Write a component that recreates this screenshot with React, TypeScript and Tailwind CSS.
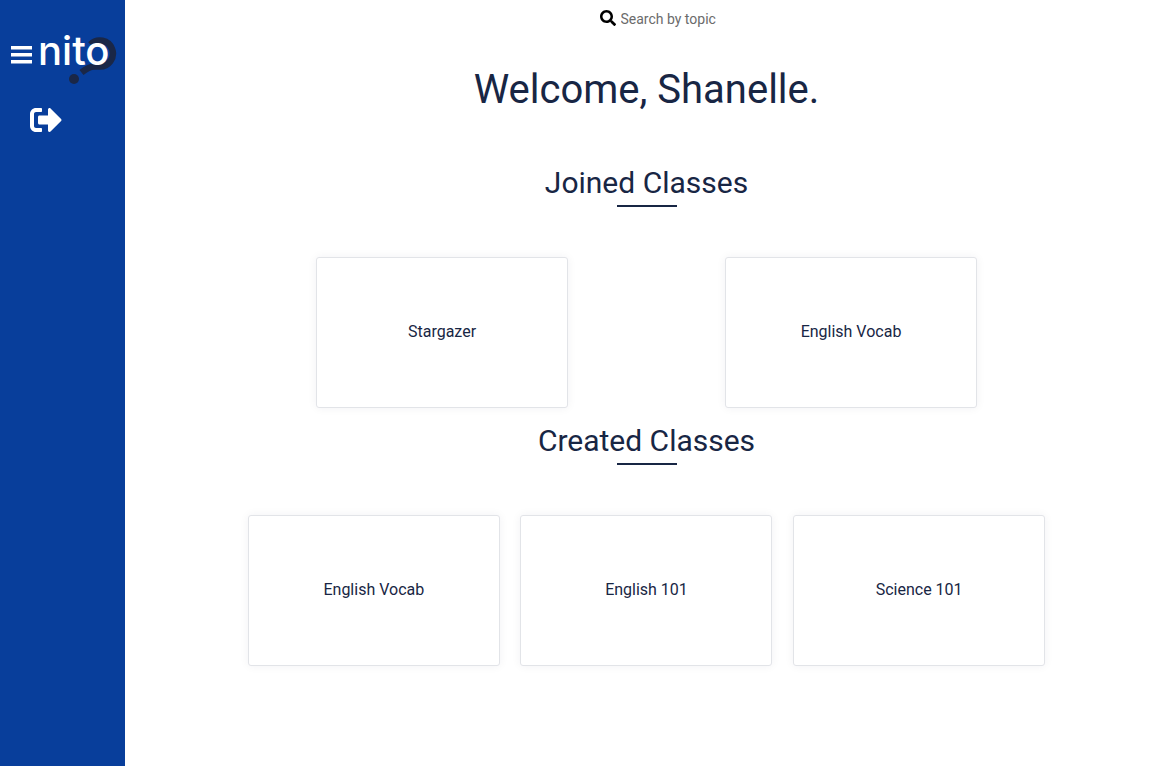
import { FaSearch, FaSignOutAlt } from "react-icons/fa";

function Logo() {
  return (
    <a href="#" aria-label="nito home" className="relative block text-[40px] leading-[42px] font-medium text-white font-[Inter,sans-serif]">
      <svg className="absolute top-0 left-0 h-14 w-20" viewBox="0 0 80 56" fill="none" aria-hidden="true">
        <path
          d="M52.500 14.500A13 13 0 1 1 61 36.500H56.500C52 36.500 48.500 38.500 43.500 42.500"
          stroke="#1a2747"
          strokeWidth="6.500"
        />
        <circle cx="36" cy="49" r="5" fill="#1a2747" />
      </svg>
      <span className="relative">nito</span>
    </a>
  );
}

function Sidebar() {
  return (
    <aside className="w-[125px] shrink-0 bg-[#083e9b] pt-[30px]">
      <div className="flex h-10 items-start pl-[11px]">
        <button type="button" aria-label="Toggle menu" className="mt-4 mr-[5px] text-white">
          <svg className="h-[18px] w-[22px]" viewBox="0 0 22 18" fill="currentColor" aria-hidden="true">
            <path d="M0 0h21v3.500H0zM0 7h21v3.500H0zM0 14h21v3.500H0z" />
          </svg>
        </button>
        <Logo />
      </div>
      <button type="button" aria-label="Log out" className="mt-[34px] ml-[30px] block text-white">
        <FaSignOutAlt size={32} />
      </button>
    </aside>
  );
}

function ClassSection({ title, classes }: { title: string; classes: string[] }) {
  return (
    <section className="flex w-full flex-col items-center">
      <h2 className="text-[30px] leading-9">{title}</h2>
      <div className="mt-1 h-[2px] w-[60px] bg-[#182644]" />
      <div className="mt-[50px] flex w-full max-w-[818px] flex-wrap justify-around gap-y-4">
        {classes.map((name) => (
          <a
            key={name}
            href="#"
            className="flex h-[151px] w-[252px] items-center justify-center rounded-[3px] border border-[#e2e4e8] bg-white pb-[2px] text-base shadow-[0_0_10px_rgba(22,37,74,0.06)]"
          >
            {name}
          </a>
        ))}
      </div>
    </section>
  );
}

export default function App() {
  return (
    <div className="flex min-h-screen bg-white text-[#182644] font-[Roboto,sans-serif]">
      <Sidebar />
      <main className="flex min-w-0 flex-1 flex-col items-center">
        <form role="search" className="flex h-9 items-center gap-[5px] pt-[2px] pl-[77px]">
          <label htmlFor="topic" className="pb-[2px]">
            <FaSearch size={16} className="text-black" aria-label="Search" />
          </label>
          <input
            id="topic"
            type="text"
            placeholder="Search by topic"
            className="w-[150px] text-sm outline-none placeholder:text-[#6b6b6b]"
          />
        </form>
        <h1 className="mt-[29px] mb-[50px] text-[40px] leading-[50px]">Welcome, Shanelle.</h1>
        <div className="flex w-full flex-col gap-[15px] pb-10">
          <ClassSection title="Joined Classes" classes={["Stargazer", "English Vocab"]} />
          <ClassSection title="Created Classes" classes={["English Vocab", "English 101", "Science 101"]} />
        </div>
      </main>
    </div>
  );
}
